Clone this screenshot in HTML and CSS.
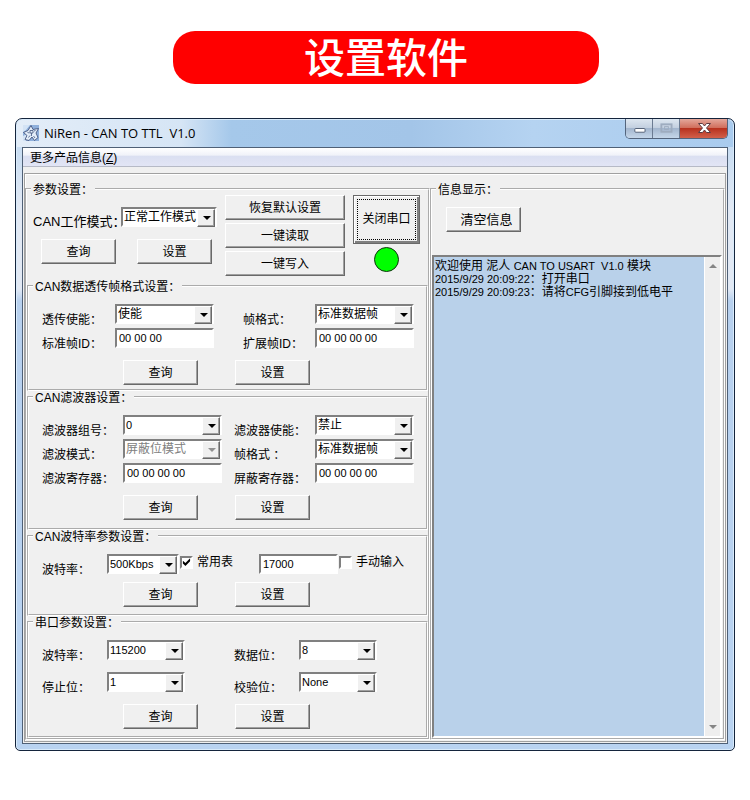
FILE: index.html
```html
<!DOCTYPE html>
<html lang="zh-CN">
<head>
<meta charset="utf-8">
<title>设置软件</title>
<link rel="stylesheet" href="styles.css">
</head>
<body>
<h1 class="banner">设置软件</h1>

<main class="window">
  <header class="titlebar">
    <svg class="app-icon" viewBox="0 0 16 16" aria-hidden="true">
      <rect width="16" height="16" fill="#8fb0dc"/>
      <path d="M0 0H7L3 5 0 7zM0 16V11L4 9 3 16z" fill="#d3e3f5"/>
      <path d="M8 0.500L10 4.500 15.500 3.500 13 8 15 12.500 11.500 15.500 9 12 6 15.500 2 14.500 4 10.500 0.500 7.500 5 5.500z" fill="#e3edf9" stroke="#3a4a74" stroke-width=".8"/>
      <path d="M7 5.500H10V8H7zM8.500 8V11M4.500 7.500L6.500 8M11 6L12.500 5.500M10.500 11L12 13M5.500 12.500L7 10.500" fill="none" stroke="#41557f" stroke-width=".8"/>
    </svg>
    <span class="title">NiRen - CAN TO TTL&nbsp; V1.0</span>
    <div class="controls">
      <button class="ctl" aria-label="最小化"><svg viewBox="0 0 28 19"><rect x="9.500" y="9.500" width="11" height="4" rx="1" fill="#fff" stroke="#4d5a70"/></svg></button>
      <button class="ctl" aria-label="最大化" disabled><svg viewBox="0 0 28 19"><rect x="9" y="5" width="11" height="8" fill="none" stroke="#9eacbf" stroke-width="2"/><rect x="12.500" y="7.500" width="4" height="3" fill="none" stroke="#9eacbf"/></svg></button>
      <button class="ctl close" aria-label="关闭"><svg viewBox="0 0 47 19"><path d="M18.500 4.500h4l2 2.500 2-2.500h4l-4 4.500 4 4.500h-4l-2-2.500-2 2.500h-4l4-4.500z" fill="#fff" stroke="#5c3a40"/></svg></button>
    </div>
  </header>

  <div class="client">
    <nav class="menubar"><button class="menu-item">更多产品信息(<u>Z</u>)</button></nav>
    <div class="panel">
      <fieldset class="settings">
        <legend>参数设置：</legend>
        <div class="overview">
          <div class="mode">
            <div class="mode-row">
              <label class="wide-text" for="mode">CAN工作模式：</label>
              <span class="combo combo-mode"><select id="mode"><option>正常工作模式</option></select></span>
            </div>
            <div class="mode-actions"><button class="btn">查询</button><button class="btn">设置</button></div>
          </div>
          <div class="quick">
            <button class="btn">恢复默认设置</button>
            <button class="btn">一键读取</button>
            <button class="btn">一键写入</button>
          </div>
          <div class="port">
            <button class="btn port-btn"><span>关闭串口</span></button>
            <svg class="lamp" viewBox="0 0 25 25" role="img" aria-label="串口已打开"><circle cx="12.500" cy="12.500" r="12" fill="#0f0" stroke="#123012"/></svg>
          </div>
        </div>

        <fieldset class="group frame-format">
          <legend>CAN数据透传帧格式设置：</legend>
          <div class="form">
            <label for="pass">透传使能：</label>
            <span class="combo"><select id="pass"><option>使能</option></select></span>
            <label for="fmt">帧格式：</label>
            <span class="combo"><select id="fmt"><option>标准数据帧</option></select></span>
            <label for="std">标准帧ID：</label>
            <input class="field" id="std" type="text" value="00 00 00">
            <label for="ext">扩展帧ID：</label>
            <input class="field" id="ext" type="text" value="00 00 00 00">
          </div>
          <div class="actions"><button class="btn">查询</button><button class="btn">设置</button></div>
        </fieldset>

        <fieldset class="group filter">
          <legend>CAN滤波器设置：</legend>
          <div class="form">
            <label for="fno">滤波器组号：</label>
            <span class="combo latin"><select id="fno"><option>0</option></select></span>
            <label for="fen">滤波器使能：</label>
            <span class="combo"><select id="fen"><option>禁止</option></select></span>
            <label for="fmode">滤波模式：</label>
            <span class="combo"><select id="fmode" disabled><option>屏蔽位模式</option></select></span>
            <label for="ffmt">帧格式 ：</label>
            <span class="combo"><select id="ffmt"><option>标准数据帧</option></select></span>
            <label for="freg">滤波寄存器：</label>
            <input class="field" id="freg" type="text" value="00 00 00 00">
            <label for="mreg">屏蔽寄存器：</label>
            <input class="field" id="mreg" type="text" value="00 00 00 00">
          </div>
          <div class="actions"><button class="btn">查询</button><button class="btn">设置</button></div>
        </fieldset>

        <fieldset class="group baud">
          <legend>CAN波特率参数设置：</legend>
          <div class="baud-row">
            <label class="low" for="cbaud">波特率：</label>
            <span class="combo latin"><select id="cbaud"><option>500Kbps</option></select></span>
            <label class="check"><input type="checkbox" checked>常用表</label>
            <input class="field" type="text" value="17000" aria-label="波特率数值">
            <label class="check"><input type="checkbox">手动输入</label>
          </div>
          <div class="actions"><button class="btn">查询</button><button class="btn">设置</button></div>
        </fieldset>

        <fieldset class="group serial">
          <legend>串口参数设置：</legend>
          <div class="form">
            <label for="sbaud">波特率：</label>
            <span class="combo latin"><select id="sbaud"><option>115200</option></select></span>
            <label for="bits">数据位：</label>
            <span class="combo latin"><select id="bits"><option>8</option></select></span>
            <label for="stop">停止位：</label>
            <span class="combo latin"><select id="stop"><option>1</option></select></span>
            <label for="parity">校验位：</label>
            <span class="combo latin"><select id="parity"><option>None</option></select></span>
          </div>
          <div class="actions"><button class="btn">查询</button><button class="btn">设置</button></div>
        </fieldset>
      </fieldset>

      <fieldset class="messages">
        <legend>信息显示：</legend>
        <button class="btn clear wide-text">清空信息</button>
        <div class="log">
          <div class="log-text" role="log">
            <p>欢迎使用 泥人 <span class="latin">CAN TO USART&nbsp; V1.0</span> 模块</p>
            <p><span class="latin">2015/9/29 20:09:22</span>：打开串口</p>
            <p><span class="latin">2015/9/29 20:09:23</span>：请将<span class="latin">CFG</span>引脚接到低电平</p>
          </div>
          <div class="scrollbar" aria-hidden="true">
            <svg viewBox="0 0 8 4"><path d="M4 0L8 4H0z" fill="#858585"/></svg>
            <svg viewBox="0 0 8 4"><path d="M0 0H8L4 4z" fill="#858585"/></svg>
          </div>
        </div>
      </fieldset>
    </div>
  </div>
</main>
</body>
</html>
```
FILE: styles.css
```css
* { box-sizing: border-box; }

body {
  margin: 0;
  padding: 31px 15px 0;
  background: #fff;
  color: #000;
  font-family: "Liberation Sans", "Noto Sans CJK SC", sans-serif;
  font-size: 12px;
  line-height: 12px;
}

button, input, select { font: inherit; color: inherit; }
p { margin: 0; }

.banner {
  width: 426px;
  max-width: 100%;
  margin: 0 auto 34px 158px;
  padding-bottom: 4px;
  border-radius: 22px;
  background: #f00;
  color: #fff;
  font-size: 41px;
  font-weight: 500;
  font-family: "Noto Sans CJK SC", sans-serif;
  line-height: 49px;
  text-align: center;
}

/* Window frame */
.window {
  padding: 0 6px;
  border: 1px solid #14243c;
  border-bottom-width: 1px;
  padding-bottom: 6px;
  border-radius: 7px 7px 5px 5px;
  background:
    linear-gradient(90deg, #e3edf8 0, #d6e5f5 23%, #a5c8ea 30%, #a3c5e8 55%, #b5d3f1 72%, #a9cbee 100%) top / 100% 28px no-repeat,
    linear-gradient(180deg, #bcd7f2 0, #e2e9f4 90px, #e2e9f4 170px, #b7d0ee 182px, #b9d3f1 100%);
  box-shadow: inset 0 0 0 1px #d9ebfb;
}

.titlebar {
  display: flex;
  align-items: center;
  height: 28px;
  padding-left: 1px;
}
.app-icon { width: 16px; height: 16px; }
.title {
  margin-left: 5px;
  font-family: "Open Sans", sans-serif;
  font-size: 13px;
  line-height: 16px;
  white-space: nowrap;
}
.controls {
  display: flex;
  align-self: flex-start;
  margin-left: auto;
  height: 20px;
  border: 1px solid #53647c;
  border-top: 0;
  border-radius: 0 0 5px 5px;
  overflow: hidden;
}
.ctl {
  width: 27px;
  padding: 0;
  border: 0;
  border-right: 1px solid #6b7b92;
  background: linear-gradient(180deg, #dde6f0 0, #c3d0e0 45%, #a3b6ce 50%, #c5d6e9 100%);
}
.ctl svg { display: block; width: 100%; height: 19px; }
.close {
  width: 47px;
  border: 0;
  background: linear-gradient(180deg, #e4a79b 0, #d1705e 45%, #b8321f 50%, #d2604a 100%);
}

.client {
  border: 1px solid #4f6076;
  background: #f0f0f0;
}
.menubar {
  height: 19px;
  margin-bottom: 6px;
  border-bottom: 1px solid #b6bac6;
  background: linear-gradient(180deg, #fff 0, #f0f2f9 40%, #dadff1 45%, #e2e5f5 100%);
}
.menu-item {
  display: block;
  padding: 0 7px;
  border: 0;
  background: none;
  line-height: 20px;
}
.panel {
  display: flex;
  margin: 0 1px 1px;
  padding: 9px 0 1px;
  border: 1px solid #a0a0a0;
  box-shadow: inset 1px 1px 0 #fff;
}

/* Group boxes */
fieldset {
  min-width: 0;
  margin: 0;
  padding: 0;
  border: 2px groove #fff;
}
legend {
  margin-left: 4px;
  padding: 0 2px;
  height: 12px;
  line-height: 15px;
  white-space: nowrap;
}
.settings { flex: none; width: 405px; }
.group { padding: 12px 0 7px 13px; }
.group legend { margin-left: -9px; }
.frame-format { padding-bottom: 4px; }
.filter { padding-bottom: 8px; }

/* Controls */
.btn {
  width: 75px;
  height: 25px;
  padding: 0;
  border: 1px solid;
  border-color: #fff #696969 #696969 #fff;
  background: #f0f0f0;
  box-shadow: inset -1px -1px 0 #a0a0a0;
  line-height: 22px;
}
.field, .combo {
  width: 99px;
  height: 20px;
  border: 2px solid;
  border-color: #808080 #fff #fff #808080;
  background: #fff;
}
.field { padding: 0 2px; font-size: 11px; line-height: 16px; }
.combo { position: relative; display: block; }
.combo select {
  display: block;
  width: 100%;
  height: 16px;
  padding: 0 16px 0 1px;
  border: 0;
  border-radius: 0;
  background: none;
  appearance: none;
  line-height: 16px;
}
.combo select:disabled { color: #808080; opacity: 1; }
.combo::before {
  content: "";
  position: absolute;
  top: 0;
  right: 0;
  width: 16px;
  height: 16px;
  border: 1px solid;
  border-color: #fff #696969 #696969 #fff;
  background: #f0f0f0;
  box-shadow: inset -1px -1px 0 #a0a0a0;
  pointer-events: none;
}
.combo::after {
  content: "";
  position: absolute;
  top: 7px;
  right: 4px;
  width: 8px;
  height: 4px;
  background: #000;
  clip-path: polygon(0 0, 100% 0, 50% 100%);
  pointer-events: none;
}
.combo:has(:disabled)::after { background: #909090; }
.latin { font-size: 11px; }
.wide-text { font-size: 13px; white-space: nowrap; }

/* Working mode and quick actions */
.overview { display: flex; height: 85px; padding-left: 6px; }
.mode { width: 192px; padding-top: 12px; }
.mode-row { display: flex; }
.mode-row label { width: 88px; line-height: 30px; height: 20px; }
.combo-mode { width: 96px; }
.mode-actions { display: flex; gap: 21px; padding: 12px 0 0 8px; }
.quick { display: grid; gap: 3px; align-content: start; width: 120px; margin-right: 8px; }
.quick .btn { width: 100%; }
.port { display: grid; gap: 3px; justify-items: center; align-content: start; }
.port-btn {
  width: 67px;
  height: 49px;
  padding: 3px;
  border-color: #696969;
  box-shadow: inset 1px 1px 0 #fff, inset -2px -2px 0 #808080;
}
.port-btn span { display: block; border: 1px dotted #000; line-height: 39px; white-space: nowrap; }
.lamp { width: 25px; height: 25px; }

/* Forms */
.form { display: grid; row-gap: 4px; }
.form label, .low { padding-top: 10px; height: 20px; white-space: nowrap; }
.frame-format .form { grid-template-columns: 73px 128px 72px 99px; }
.filter .form { grid-template-columns: 81px 111px 81px 99px; }
.serial .form { grid-template-columns: 65px 127px 65px 78px; row-gap: 12px; }
.serial .combo { width: 78px; }
.actions { display: flex; gap: 37px; padding: 12px 0 0 81px; }

.baud-row { display: flex; }
.baud-row .low { width: 65px; }
.baud-row .combo { width: 72px; }
.baud-row .field { width: 79px; }
.baud .actions { padding-top: 8px; }
.check { display: flex; gap: 4px; height: 16px; align-items: center; width: 80px; white-space: nowrap; }
.check input {
  width: 13px;
  height: 13px;
  margin: 0 0 0 1px;
  border: 2px solid;
  border-color: #808080 #fff #fff #808080;
  background: #fff;
  appearance: none;
}
.check input:checked::after {
  content: "";
  display: block;
  width: 9px;
  height: 9px;
  background: #000;
  clip-path: polygon(10% 35%, 38% 60%, 90% 8%, 90% 42%, 38% 95%, 10% 68%);
}

/* Messages */
.messages { display: flex; flex: 1; flex-direction: column; }
.clear { margin: 12px 0 23px 14px; padding-left: 6px; }
.log {
  display: flex;
  flex: 1;
  margin-right: 1px;
  border: 2px solid;
  border-color: #808080 #fff #fff #808080;
  background: #b9d1ea;
}
.log-text { flex: 1; padding-top: 3px; line-height: 13px; }
.log-text p { height: 13px; padding-left: 1px; }
.scrollbar {
  display: flex;
  flex-direction: column;
  justify-content: space-between;
  align-items: center;
  width: 16px;
  padding: 7px 0;
  border-left: 1px solid #fff;
  background: #eee;
}
.scrollbar svg { width: 8px; height: 4px; }
```
